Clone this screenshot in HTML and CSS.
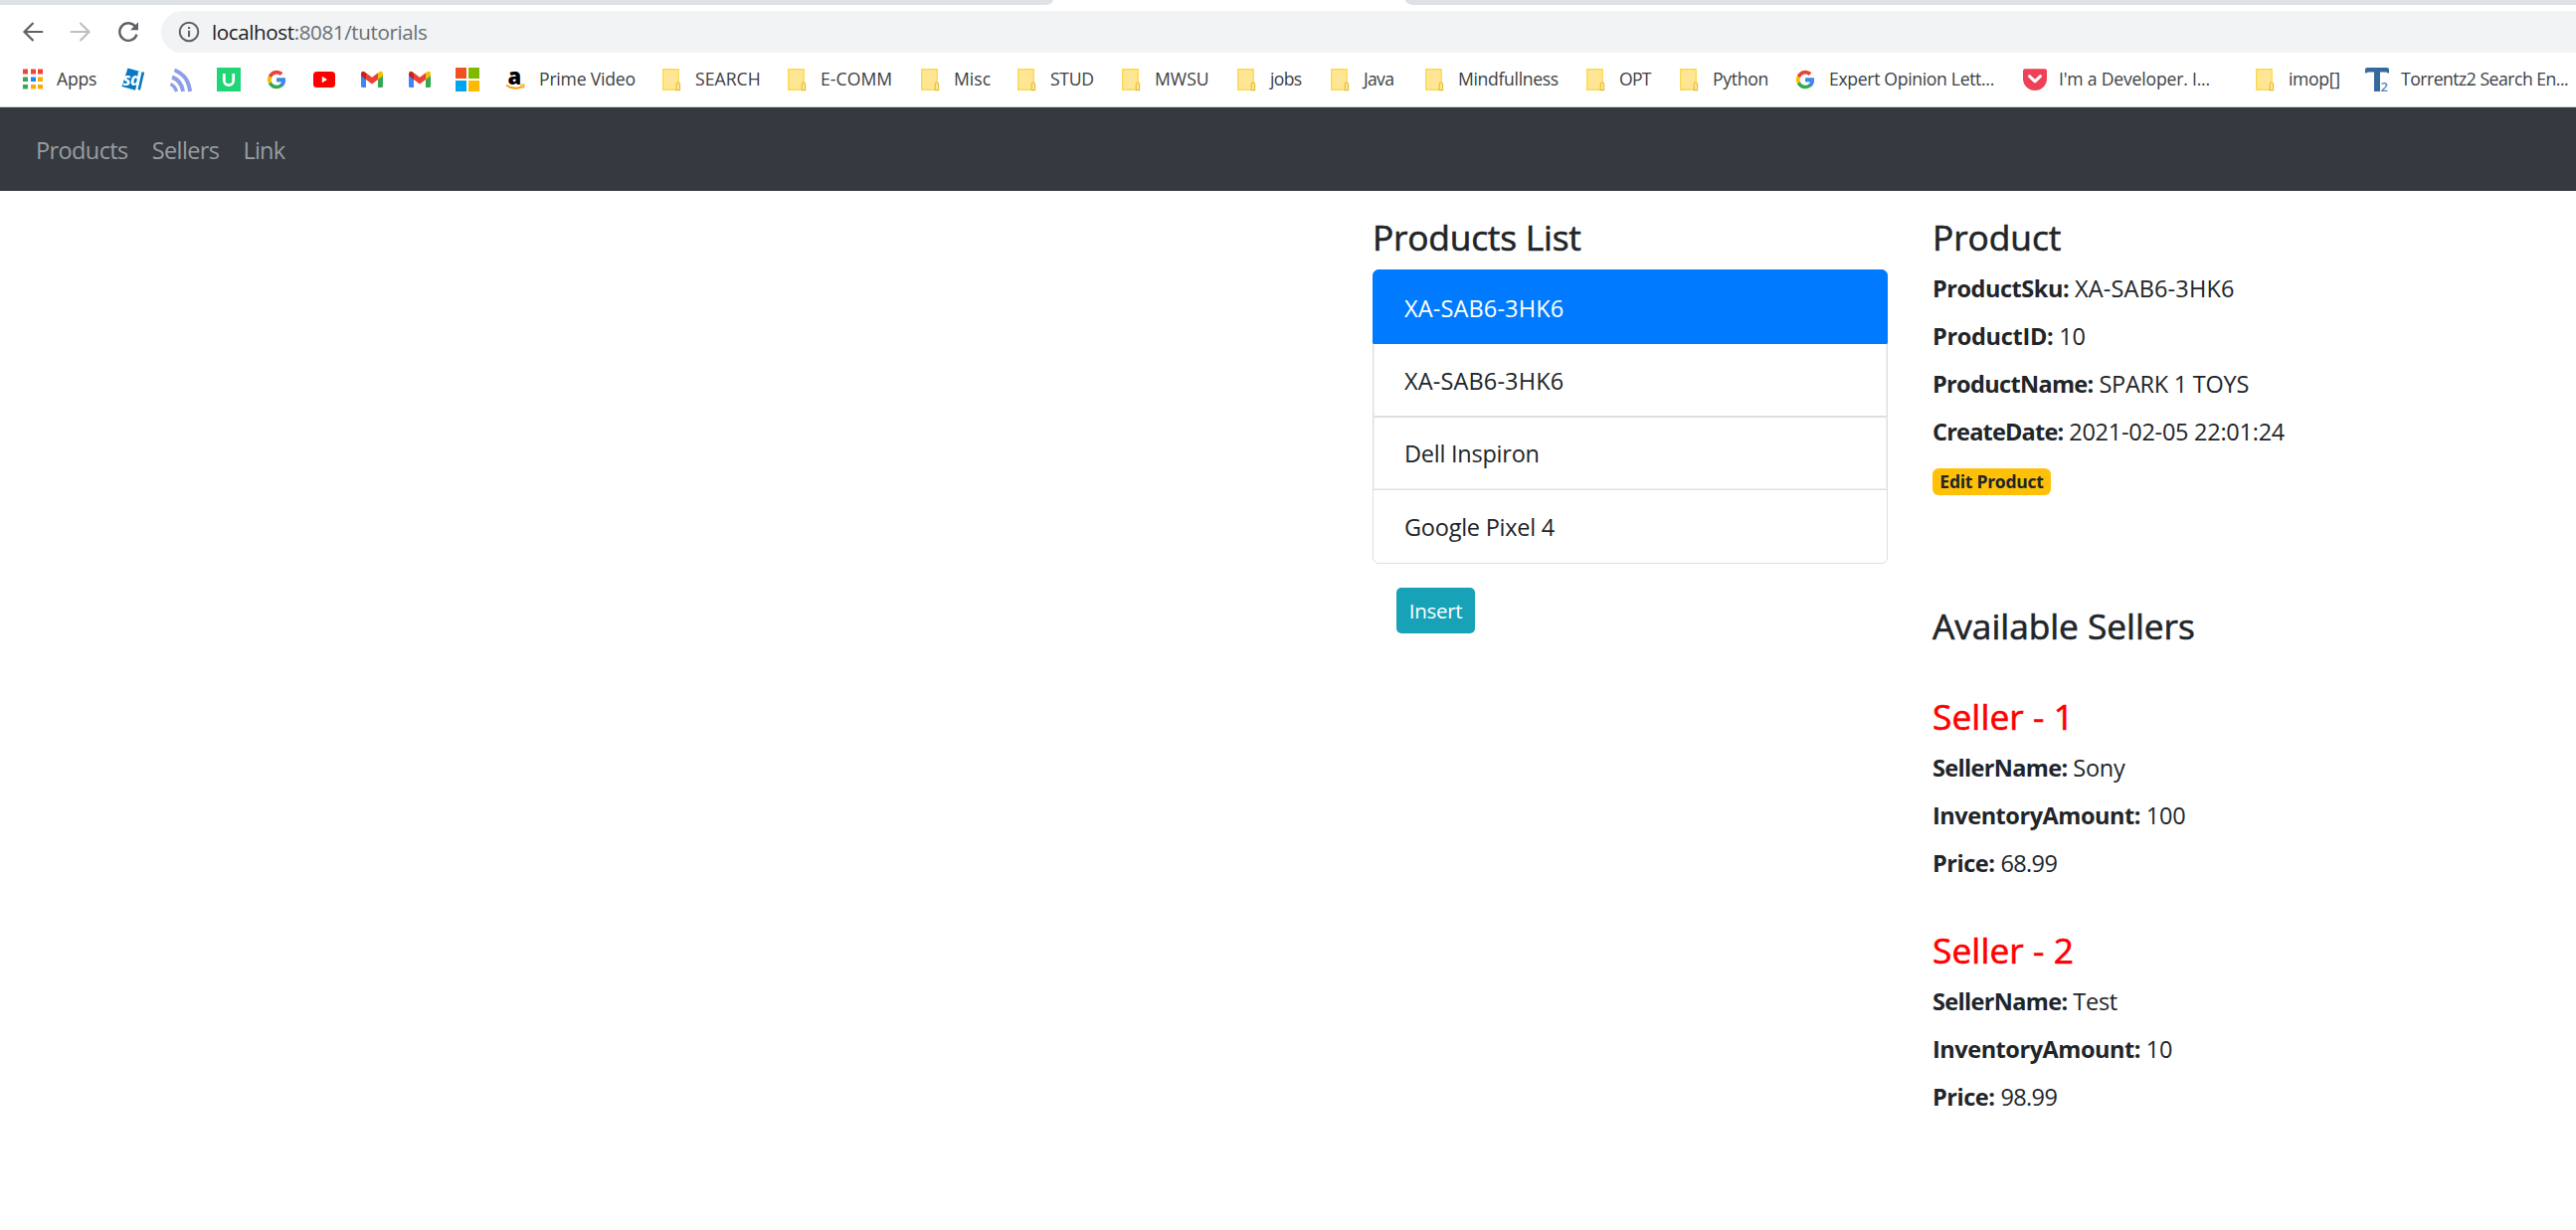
FILE: index.html
```html
<!DOCTYPE html>
<html lang="en">
<head>
<meta charset="utf-8">
<title>Products</title>
<link rel="stylesheet" href="styles.css">
</head>
<body>
<svg class="defs" width="0" height="0" aria-hidden="true">
  <symbol id="folder" viewBox="0 0 24 24">
    <path d="M3.7 1.8h15.5v20.4H3.7z" fill="#ffe694" stroke="#fbd952" stroke-width="1.4"/>
    <path d="M17.2 22.6v-6q0-1.6 1.7-1.6t1.7 1.6v6z" fill="#ffe694" stroke="#e5bd35" stroke-width="1.1"/>
  </symbol>
  <symbol id="google" viewBox="0 0 24 24">
    <path d="M20.8 10.5H12.2v3.7h5c-.5 2.2-2.4 3.5-5 3.5a5.6 5.6 0 0 1-5.3-3.8L3.9 16.2A9.2 9.2 0 0 0 12.2 21.2c4.9 0 8.8-3.4 8.8-9.2z" fill="#34a853"/>
    <path d="M3.9 16.2a9.2 9.2 0 0 1 0-8.3l3 2.3a5.6 5.6 0 0 0 0 3.7z" fill="#fbbc05"/>
    <path d="M3.9 7.9a9.2 9.2 0 0 1 14.5-2.6l-2.7 2.6a5.5 5.5 0 0 0-8.8 2.3z" fill="#ea4335"/>
    <path d="M20.8 10.5H12.2v3.7h5c-.3 1.1-.9 2-1.8 2.6l2.9 2.3c1.8-1.7 2.7-4.100 2.700-7.100z" fill="#4285f4"/>
  </symbol>
  <symbol id="gmail" viewBox="0 0 24 24">
    <path d="M1 6.500L6 9.500V20H2.500Q1 20 1 18.500z" fill="#4285f4"/>
    <path d="M18 9.500L23 6.500V18.500Q23 20 21.500 20H18z" fill="#34a853"/>
    <path d="M18 5.200L20 3.900Q23 3 23 6.200V8.200L18 12z" fill="#fbbc04"/>
    <path d="M1 6.200Q1 3 4 3.900L6 5.200V12L1 8.200z" fill="#c5221f"/>
    <path d="M6 5.200l6 4.600 6-4.600V12l-6 4.600L6 12z" fill="#ea4335"/>
  </symbol>
</svg>

<div class="tabstrip"><span class="tabs-left"></span><span class="tabs-right"></span></div>

<header class="toolbar">
  <svg class="tool" viewBox="0 0 24 24"><path d="M22.200 12H3.500M12.500 3L3.500 12l9 9" fill="none" stroke="#5f6368" stroke-width="2.200"/></svg>
  <svg class="tool" viewBox="0 0 24 24"><path d="M1.800 12h18.700M11.500 3l9 9-9 9" fill="none" stroke="#bdbfc2" stroke-width="2.200"/></svg>
  <svg class="tool" viewBox="0 0 24 24"><path d="M19.300 7A8.800 8.800 0 1 0 20.500 14.600" fill="none" stroke="#5f6368" stroke-width="2.400"/><path d="M22 2.200v8h-8z" fill="#5f6368"/></svg>
  <div class="omnibox">
    <svg class="info" viewBox="0 0 22 22"><circle cx="11" cy="11" r="9.300" fill="none" stroke="#5f6368" stroke-width="2"/><path d="M10 9.800h2.100v6.200H10zM10 6h2.100v2.100H10z" fill="#5f6368"/></svg>
    <span class="url"><b>localhost</b>:8081/tutorials</span>
  </div>
</header>

<nav class="bookmarks">
  <a><svg viewBox="0 0 24 24"><path d="M3 1.500h5v5H3zM11 1.500h5v5h-5zM18 1.500h5v5h-5z" fill="#f14336"/><path d="M3 9.500h5v4.500H3zM3 17h5v4.500H3z" fill="#34a853"/><path d="M11 9.500h5v4.500h-5z" fill="#1a88f5"/><path d="M18 9.500h5v4.500h-5zM11 17h5v4.500h-5zM18 17h5v4.500h-5z" fill="#fbab05"/></svg><span class="apps">Apps</span></a>
  <a><svg viewBox="0 0 24 24"><path d="M6.500 .5L19 4 14 22.800 .5 19z" fill="#0878c2"/><path d="M20.500 4.200l2.700 .6L19 22.800l-2.500-.8z" fill="#0878c2"/><text x="1.500" y="18" class="sd" fill="#fff">sd</text></svg></a>
  <a><svg viewBox="0 0 24 24"><g fill="none" stroke="#8f9ee8" stroke-width="4"><path d="M5.500 2.500Q19.500 8 21 24"/><path d="M3 9.500Q12.500 13 14 24"/><path d="M1.500 16.500Q5.800 18.500 7.500 24" stroke-width="3.500"/></g></svg></a>
  <a><svg viewBox="0 0 24 24"><path d="M0 0h24v24H0z" fill="#1fd575"/><path d="M7.300 6v7a4.700 4.700 0 0 0 9.400 0V6" fill="none" stroke="#fff" stroke-width="2.800"/></svg></a>
  <a><svg viewBox="0 0 24 24"><use href="#google"/></svg></a>
  <a><svg viewBox="0 0 24 24"><rect x="1" y="4" width="22" height="16" rx="3.500" fill="#f00"/><path d="M9.800 8.700v6.600l5.200-3.300z" fill="#fff"/></svg></a>
  <a><svg viewBox="0 0 24 24"><use href="#gmail"/></svg></a>
  <a><svg viewBox="0 0 24 24"><use href="#gmail"/></svg></a>
  <a><svg viewBox="0 0 24 24"><path d="M0 0h11v11H0z" fill="#f25022"/><path d="M13 0h11v11H13z" fill="#7fba00"/><path d="M0 13h11v11H0z" fill="#00a4ef"/><path d="M13 13h11v11H13z" fill="#ffb900"/></svg></a>
  <a><svg viewBox="0 0 24 24"><text x="4.500" y="16.500" class="amazon">a</text><path d="M3 17.800q8.500 5.500 16.500 1" fill="none" stroke="#f90" stroke-width="1.900"/><path d="M17.500 17.300q4-.8 3.700.4-.2 1.800-1.500 3" fill="none" stroke="#f90" stroke-width="1.200"/></svg><span class="prime">Prime Video</span></a>
  <a><svg viewBox="0 0 24 24"><use href="#folder"/></svg><span class="loose">SEARCH</span></a>
  <a><svg viewBox="0 0 24 24"><use href="#folder"/></svg><span class="loose">E-COMM</span></a>
  <a><svg viewBox="0 0 24 24"><use href="#folder"/></svg><span class="loose">Misc</span></a>
  <a><svg viewBox="0 0 24 24"><use href="#folder"/></svg><span>STUD</span></a>
  <a><svg viewBox="0 0 24 24"><use href="#folder"/></svg><span class="loose">MWSU</span></a>
  <a><svg viewBox="0 0 24 24"><use href="#folder"/></svg><span class="tight">jobs</span></a>
  <a><svg viewBox="0 0 24 24"><use href="#folder"/></svg><span class="tight">Java</span></a>
  <a><svg viewBox="0 0 24 24"><use href="#folder"/></svg><span>Mindfullness</span></a>
  <a><svg viewBox="0 0 24 24"><use href="#folder"/></svg><span class="tight">OPT</span></a>
  <a><svg viewBox="0 0 24 24"><use href="#folder"/></svg><span>Python</span></a>
  <a><svg viewBox="0 0 24 24"><use href="#google"/></svg><span>Expert Opinion Lett...</span></a>
  <a><svg viewBox="0 0 24 24"><path d="M2 1.200h20q2 0 2 2V11a12 12 0 0 1-24 0V3.200q0-2 2-2z" fill="#ee4056"/><path d="M6.500 8.700l5.500 5.200 5.500-5.200" fill="none" stroke="#fff" stroke-width="3" stroke-linecap="round" stroke-linejoin="round"/></svg><span class="dev">I'm a Developer. I...</span></a>
  <a><svg viewBox="0 0 24 24"><use href="#folder"/></svg><span>imop[]</span></a>
  <a><svg viewBox="0 0 24 24"><path d="M2 0h20q2 0 2 2v3.500h-1.200Q22 4.500 20 4.500H15V24H9V4.500H4Q2 4.500 1.200 5.500H0V2Q0 0 2 0z" fill="#36699e"/><text x="15.500" y="23.500" class="tz" fill="#5d88b6">2</text></svg><span class="torrent">Torrentz2 Search En...</span></a>
</nav>

<nav class="navbar">
  <a>Products</a><a>Sellers</a><a class="short">Link</a>
</nav>

<main class="page">
  <section class="list-col">
    <h4 class="list-title">Products List</h4>
    <ul class="list-group">
      <li class="active">XA-SAB6-3HK6</li>
      <li>XA-SAB6-3HK6</li>
      <li class="name">Dell Inspiron</li>
      <li class="name">Google Pixel 4</li>
    </ul>
    <button class="insert">Insert</button>
  </section>
  <section class="detail-col">
    <h4>Product</h4>
    <p><strong>ProductSku:</strong> <span class="sku">XA-SAB6-3HK6</span></p>
    <p><strong class="id">ProductID:</strong> 10</p>
    <p><strong class="wide">ProductName:</strong> SPARK 1 TOYS</p>
    <p><strong class="date">CreateDate:</strong> 2021-02-05 22:01:24</p>
    <a class="badge">Edit Product</a>
    <h4 class="available">Available Sellers</h4>
    <article class="seller">
      <h4>Seller - 1</h4>
      <p><strong class="wide">SellerName:</strong> Sony</p>
      <p><strong>InventoryAmount:</strong> 100</p>
      <p><strong>Price:</strong> <span class="price">68.99</span></p>
    </article>
    <article class="seller">
      <h4>Seller - 2</h4>
      <p><strong class="wide">SellerName:</strong> Test</p>
      <p><strong>InventoryAmount:</strong> 10</p>
      <p><strong>Price:</strong> <span class="price">98.99</span></p>
    </article>
  </section>
</main>
</body>
</html>
```
FILE: styles.css
```css
* { box-sizing: border-box; }
body {
  margin: 0;
  background: #fff;
  color: #212529;
  font: 23.5px/36px "Open Sans", "Noto Sans", sans-serif;
  overflow: hidden;
}
.defs { position: absolute; }

/* browser chrome */
.tabstrip { display: flex; justify-content: space-between; height: 5px; }
.tabstrip span { background: #dee1e6; }
.tabs-left { width: 1059px; border-bottom-right-radius: 8px 5px; }
.tabs-right { width: 1177px; border-bottom-left-radius: 8px 5px; }

.toolbar { display: flex; align-items: center; height: 54px; padding: 0 0 0 21px; }
.tool { width: 24px; height: 24px; margin-right: 24px; }
.omnibox {
  display: flex;
  align-items: center;
  flex: 1;
  height: 42px;
  margin-left: -3px;
  padding-left: 17px;
  background: #f1f3f4;
  border-radius: 21px 0 0 21px;
}
.info { width: 22px; height: 22px; margin-right: 12px; }
.url { font-size: 20.6px; letter-spacing: -.4px; color: #6b6f73; white-space: nowrap; }
.url b { font-weight: 400; color: #202124; }

.bookmarks {
  display: grid;
  grid-template-columns: 102px repeat(8, 48px) 157px 126px 134px 97px 105px 116px 94px 95px 162px 94px 117px 231px 231px 113px 212px;
  align-items: center;
  height: 49px;
  padding: 0 0 6px 20px;
  border-bottom: 1px solid #d9dbdd;
}
.bookmarks a { display: flex; align-items: center; gap: 12px; }
.bookmarks svg { flex: none; width: 24px; height: 24px; overflow: visible; }
.bookmarks span {
  font-size: 17.6px;
  line-height: 22px;
  padding-bottom: 2px;
  letter-spacing: -.33px;
  color: #3c4043;
  white-space: nowrap;
}
.bookmarks .apps { margin-left: 1px; letter-spacing: -.2px; }
.bookmarks .prime { letter-spacing: -.2px; }
.bookmarks .dev { letter-spacing: -.2px; }
.bookmarks .loose { letter-spacing: .05px; }
.bookmarks .tight { letter-spacing: -.7px; }
.bookmarks .torrent { letter-spacing: -.5px; }
.sd { font: italic 700 17px "Open Sans", sans-serif; letter-spacing: -.5px; }
.amazon { font: 800 22px "Open Sans", sans-serif; }
.tz { font: 600 13px "Open Sans", sans-serif; }

/* application */
.navbar {
  display: flex;
  align-items: center;
  gap: 24px;
  height: 84px;
  padding: 2px 36px 0;
  background: #343a40;
  color: #9a9da0;
  letter-spacing: -.6px;
}
.navbar .short { letter-spacing: -.8px; }

.page { display: flex; gap: 45px; padding: 24px 0 0 1380px; }
.list-col { width: 518px; }
h4 {
  margin: 0 0 12px;
  padding-top: 1px;
  font-size: 35.3px;
  font-weight: 500;
  line-height: 42px;
  letter-spacing: -.05px;
  -webkit-text-stroke: .6px currentColor;
}
.list-title { letter-spacing: -.2px; }

.list-group { margin: 0; padding: 0; list-style: none; }
.list-group li {
  height: 75px;
  margin-top: -1.33px;
  padding: 19px 30px 0 31px;
  border: 1px solid #dfdfdf;
  box-shadow: inset 1px -1px 0 #f0f0f0, inset -1px 0 0 #f0f0f0;
  letter-spacing: .15px;
}
.list-group .active {
  margin-top: 0;
  padding-top: 20px;
  border-color: #007bff;
  border-radius: 6px 6px 0 0;
  background: #007bff;
  box-shadow: none;
  color: #fff;
}
.list-group .active + li { border-top-color: #007bff; }
.list-group li:last-child { border-radius: 0 0 6px 6px; box-shadow: none; }
.list-group .name { letter-spacing: -.24px; }

.insert {
  display: block;
  width: 79px;
  height: 46px;
  margin: 24px 0 0 24px;
  padding: 0;
  border: 0;
  border-radius: 5px;
  background: #17a2b8;
  color: #fff;
  font: 20.5px/46px "Open Sans", sans-serif;
  letter-spacing: -.3px;
}

.detail-col { flex: 1; }
p {
  margin: 0 0 12px;
  padding-top: 2px;
  line-height: 34px;
  letter-spacing: -.26px;
}
strong { font-weight: 700; letter-spacing: -.46px; }
strong.id { letter-spacing: -.31px; }
strong.wide { letter-spacing: -.66px; }
strong.date { letter-spacing: -.8px; }
.sku { letter-spacing: .17px; }
.price { letter-spacing: -.6px; }

.badge {
  display: block;
  width: 119px;
  height: 27px;
  margin: 20px 0 109px;
  border-radius: 6px;
  background: #ffc107;
  font-size: 17.6px;
  font-weight: 700;
  line-height: 26px;
  letter-spacing: -.3px;
  text-align: center;
}
.available { margin-bottom: 48px; }
.seller { margin-bottom: 48px; }
.seller h4 { letter-spacing: .1px; color: #f00; }
```
